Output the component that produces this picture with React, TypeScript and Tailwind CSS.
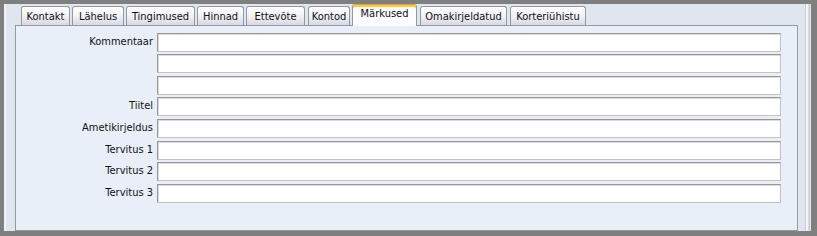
import React from 'react';

const tabs: { label: string; width: number; gap: number; active?: boolean }[] = [
  { label: 'Kontakt', width: 49, gap: 0 },
  { label: 'Lähelus', width: 52, gap: 2 },
  { label: 'Tingimused', width: 69, gap: 2 },
  { label: 'Hinnad', width: 47, gap: 2 },
  { label: 'Ettevõte', width: 59, gap: 2 },
  { label: 'Kontod', width: 42, gap: 3 },
  { label: 'Märkused', width: 65, gap: 2, active: true },
  { label: 'Omakirjeldatud', width: 87, gap: 3 },
  { label: 'Korteriühistu', width: 76, gap: 3 },
];

const rows: { label: string; top: number }[] = [
  { label: 'Kommentaar', top: 7 },
  { label: '', top: 2 },
  { label: '', top: 3 },
  { label: 'Tiitel', top: 2 },
  { label: 'Ametikirjeldus', top: 3 },
  { label: 'Tervitus 1', top: 3 },
  { label: 'Tervitus 2', top: 2 },
  { label: 'Tervitus 3', top: 3 },
];

function Tab(props: { label: string; width: number; gap: number; active?: boolean }) {
  const { label, width, gap, active } = props;
  if (active) {
    return (
      <div
        style={{ width, marginLeft: gap }}
        className="relative z-10 -mb-px flex h-[22px] items-start justify-center rounded-t-[3px] border border-b-0 border-[#919b9c] border-t-[#e3a33d] bg-[#fcfcfe] pt-[3px] shadow-[inset_0_2px_0_#ffc83c]"
      >
        {label}
      </div>
    );
  }
  return (
    <div
      style={{ width, marginLeft: gap }}
      className="flex h-[19px] items-center justify-center rounded-t-[3px] border border-b-0 border-[#919b9c] bg-gradient-to-b from-[#ffffff] via-[#f2f2f6] to-[#d8d8e5] pt-px"
    >
      {label}
    </div>
  );
}

export default function App() {
  return (
    <div
      className="h-[236px] w-[817px] bg-[#7f7f7f] pl-[4px] pt-[4px] text-[11px] text-[#111]"
      style={{ fontFamily: '"DejaVu Sans Condensed", "Liberation Sans", Arial, sans-serif' }}
    >
      <div className="flex h-[227px] w-[807px] bg-[#dfe6ef]">
        <div className="w-[2px] bg-[#f1f3f6]" />

        <div className="flex flex-1 flex-col pl-[9px] pr-[7px]">
          <div className="flex h-[21px] items-end pl-[6px] leading-none">
            {tabs.map((t) => (
              <Tab key={t.label} {...t} />
            ))}
          </div>

          <section className="flex-1 border border-[#919b9c] bg-[#e9eff8] pr-[16px]">
            {rows.map((r, i) => (
              <div key={i} style={{ marginTop: r.top }} className="flex h-[19px] items-center">
                <div className="w-[137px] whitespace-nowrap text-right">{r.label}</div>
                <div className="ml-[4px] h-[19px] flex-1 border border-[#979797] border-b-[#c2c2c2] border-r-[#c2c2c2] bg-white shadow-[inset_1px_1px_0_#dcdcdc]" />
              </div>
            ))}
          </section>
        </div>

        <div className="flex">
          <div className="w-px bg-[#c6cdd6]" />
          <div className="w-[2px] bg-[#f3f5f8]" />
          <div className="w-px bg-[#d9dde2]" />
          <div className="w-px bg-[#c9c9c9]" />
          <div className="w-px bg-[#e6e6e6]" />
        </div>
      </div>
    </div>
  );
}
